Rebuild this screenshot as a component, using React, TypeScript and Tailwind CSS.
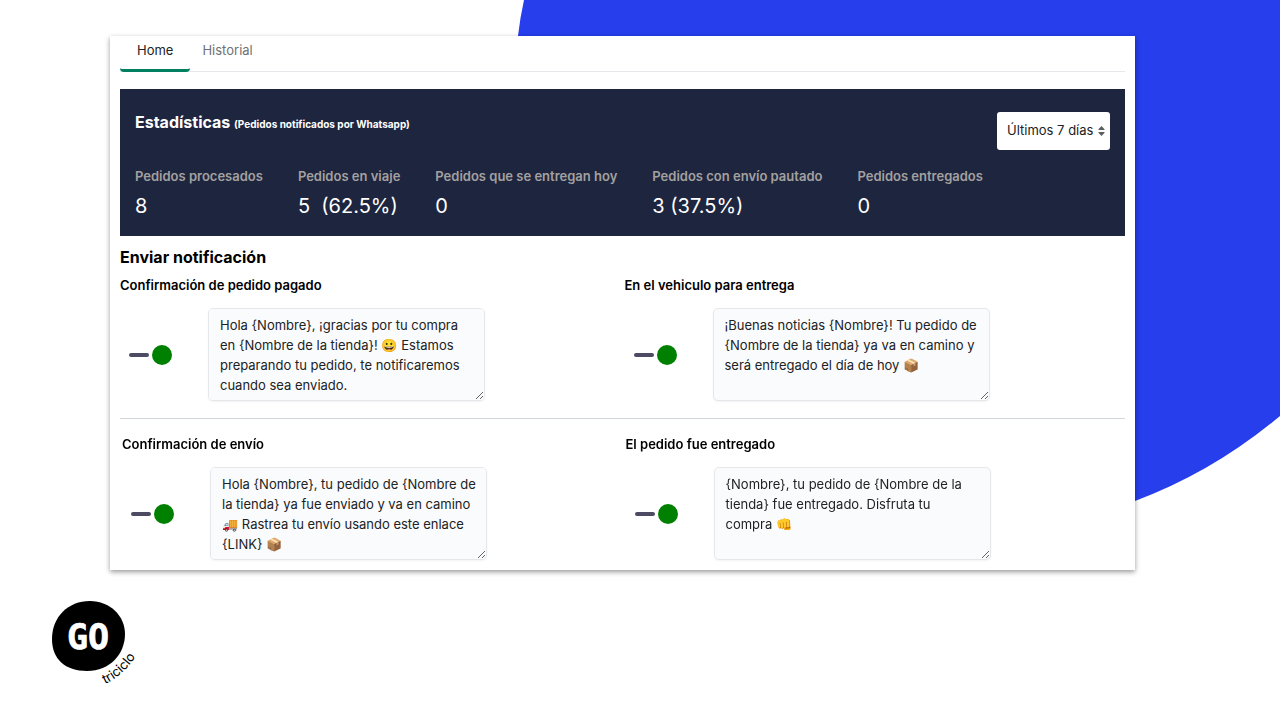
import { useState } from "react";

type Stat = {
  label: string;
  value: string;
};

type Notification = {
  id: string;
  title: string;
  message: string;
};

const stats: Stat[] = [
  { label: "Pedidos procesados", value: "8" },
  { label: "Pedidos en viaje", value: "5  (62.5%)" },
  { label: "Pedidos que se entregan hoy", value: "0" },
  { label: "Pedidos con envío pautado", value: "3 (37.5%)" },
  { label: "Pedidos entregados", value: "0" },
];

const rows: Notification[][] = [
  [
    {
      id: "pagado",
      title: "Confirmación de pedido pagado",
      message:
        "Hola {Nombre}, ¡gracias por tu compra en {Nombre de la tienda}! 😀 Estamos preparando tu pedido, te notificaremos cuando sea enviado.",
    },
    {
      id: "vehiculo",
      title: "En el vehiculo para entrega",
      message:
        "¡Buenas noticias {Nombre}! Tu pedido de {Nombre de la tienda} ya va en camino y será entregado el día de hoy 📦",
    },
  ],
  [
    {
      id: "envio",
      title: "Confirmación de envío",
      message:
        "Hola {Nombre}, tu pedido de {Nombre de la tienda} ya fue enviado y va en camino 🚚 Rastrea tu envío usando este enlace {LINK} 📦",
    },
    {
      id: "entregado",
      title: "El pedido fue entregado",
      // the emoji stays on the same line as the last word
      message: "{Nombre}, tu pedido de {Nombre de la tienda} fue entregado. Disfruta tu compra\u00a0👊",
    },
  ],
];

function Tabs() {
  return (
    <nav className="flex border-b border-gray-200 text-[13px] leading-5">
      <a href="#home" className="-mb-px rounded-sm border-b-3 border-[#008060] px-[17px] pt-1 pb-[9px] text-[#202223]">
        Home
      </a>
      <a href="#historial" className="px-3 pt-1 pb-[9px] text-[#6d7175]">
        Historial
      </a>
    </nav>
  );
}

function RangeSelect() {
  return (
    <div className="relative">
      <select
        aria-label="Período"
        className="h-[38px] w-[113px] appearance-none rounded-[3px] bg-white pl-2.5 text-[13px] text-[#202223]"
      >
        <option>Últimos 7 días</option>
        <option>Últimos 30 días</option>
      </select>
      <svg viewBox="0 0 7 10" className="pointer-events-none absolute top-3.5 right-[5px] h-2.5 w-[7px] fill-[#5c5f62]">
        <path d="M3.5 0 6.6 3.2Q6.8 4 6 4H1Q.2 4 .4 3.2Z" />
        <path d="M3.5 10 6.6 6.8Q6.8 6 6 6H1Q.2 6 .4 6.8Z" />
      </svg>
    </div>
  );
}

function Stats() {
  return (
    <section className="mt-[17px] bg-[#1e253f] px-[15px] pt-[23px] pb-4 text-white">
      <div className="flex items-start justify-between">
        <h2 className="text-base leading-5 font-bold">
          Estadísticas <span className="text-[10px]">(Pedidos notificados por Whatsapp)</span>
        </h2>
        <RangeSelect />
      </div>
      <dl className="mt-4 flex gap-[35px]">
        {stats.map((stat) => (
          <div key={stat.label}>
            <dt className="text-[13px] leading-5 font-semibold text-[#a3a19f]">{stat.label}</dt>
            <dd className="mt-1.5 text-xl leading-7 whitespace-pre">{stat.value}</dd>
          </div>
        ))}
      </dl>
    </section>
  );
}

function Toggle({ label }: { label: string }) {
  const [on, setOn] = useState(true);

  return (
    <label className={`flex cursor-pointer items-center gap-[3px] ${on ? "" : "flex-row-reverse"}`}>
      <input
        type="checkbox"
        className="sr-only"
        aria-label={label}
        checked={on}
        onChange={(e) => setOn(e.target.checked)}
      />
      <span className="h-1 w-5 rounded-full bg-[#4d4b63]"></span>
      <span className={`h-5 w-5 rounded-full ${on ? "bg-[#008000]" : "bg-gray-400"}`}></span>
    </label>
  );
}

function NotificationCard({ item }: { item: Notification }) {
  return (
    <div>
      <label htmlFor={item.id} className="block text-[13px] leading-5 font-semibold text-black">
        {item.title}
      </label>
      <div className="mt-[13px] flex items-center pl-[9px]">
        <Toggle label={item.title} />
        <textarea
          id={item.id}
          defaultValue={item.message}
          className="ml-9 block h-[93px] w-[277px] rounded-[5px] border border-gray-200 bg-[#fafbfd] py-1.5 pr-2 pl-[11px] text-[13px] leading-5 text-[#202223] shadow-xs"
        />
      </div>
    </div>
  );
}

function Logo() {
  return (
    <svg viewBox="0 0 100 90" className="h-[90px] w-[100px]" role="img" aria-label="GO triciclo">
      <path d="M40 1C60 1 75 16 75 34C75 54 60 71 37 71C15 71 2 59 2 39C2 17 18 1 40 1Z" fill="#000" />
      <text
        x="38"
        y="49"
        textAnchor="middle"
        fill="#fff"
        stroke="#fff"
        strokeWidth="0.7"
        strokeLinejoin="round"
        fontSize="35"
        fontWeight="700"
        fontFamily="DejaVu Sans Mono, monospace"
      >
        GO
      </text>
      <path id="logo-arc" d="M55 84Q77 74 92 46" fill="none" />
      <text fill="#000" fontSize="13" fontFamily="Inter, sans-serif">
        <textPath href="#logo-arc">triciclo</textPath>
      </text>
    </svg>
  );
}

export default function App() {
  return (
    <div className="relative isolate min-h-screen overflow-hidden bg-white pt-9 pr-[145px] pl-[110px] font-[Inter,'Noto_Color_Emoji',sans-serif]">
      <svg viewBox="0 0 763 502" className="absolute top-0 right-0 -z-10 h-[502px] w-[763px]" aria-hidden="true">
        <path d="M7 0Q3 18 1 36C-20 300 300 620 618 501Q696 472 763 416V0Z" fill="#263eeb" />
      </svg>
      <main className="bg-white px-2.5 pb-2.5 shadow-[0_2px_5px_rgba(0,0,0,0.4)]">
        <Tabs />
        <Stats />
        <h2 className="mt-[9px] text-base leading-6 font-bold text-black">Enviar notificación</h2>
        {rows.map((row, i) => (
          <div
            key={row[0].id}
            className={
              i > 0
                ? "mt-[17px] grid grid-cols-2 gap-1 border-t border-gray-300 pt-[15px] pl-0.5"
                : "mt-1.5 grid grid-cols-2 gap-1"
            }
          >
            {row.map((item) => (
              <NotificationCard key={item.id} item={item} />
            ))}
          </div>
        ))}
      </main>
      <footer className="-ml-[60px] pt-[30px]">
        <Logo />
      </footer>
    </div>
  );
}
